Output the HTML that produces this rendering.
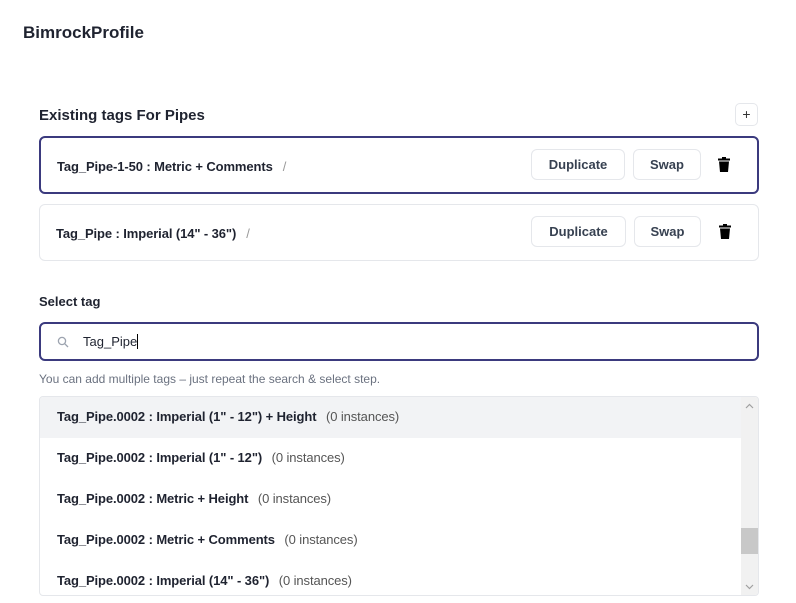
<!DOCTYPE html>
<html><head><style>
*{box-sizing:border-box;margin:0;padding:0}
body{width:796px;height:603px;background:#fff;font-family:"Liberation Sans",sans-serif;color:#1f2330;position:relative;overflow:hidden}
.abs{position:absolute}
.title{left:23px;top:23px;font-size:17px;font-weight:600}
.h{left:39px;top:107px;font-size:15px;font-weight:600}
.plus{left:735px;top:103px;width:23px;height:23px;border:1px solid #e5e7eb;border-radius:5px;text-align:center;line-height:20px;font-size:14px;color:#333}
.card{left:39px;width:720px;border:1px solid #e5e7eb;border-radius:6px}
.card.sel{border:2px solid #3b3a7e}
.card .t{position:absolute;left:16px;font-size:13px;font-weight:600;letter-spacing:-0.1px}
.card .t span{color:#999;font-weight:400;margin-left:10px}
.btn{position:absolute;height:31px;border:1px solid #e5e7eb;border-radius:6px;font-size:13px;font-weight:600;text-align:center;line-height:29px;color:#374151}
.lbl{left:39px;top:294px;font-size:13px;font-weight:600}
.inp{left:39px;top:322px;width:720px;height:39px;border:2px solid #3b3a7e;border-radius:6px}
.hint{left:39px;top:372px;font-size:12px;color:#6b7280}
.list{left:39px;top:396px;width:720px;height:200px;border:1px solid #e5e7eb;border-radius:4px;overflow:hidden}
.row{position:absolute;left:0;width:702px;height:41px;font-size:13px;font-weight:600;padding-left:17px;line-height:39px;letter-spacing:-0.1px}
.row span{font-weight:400;color:#555;margin-left:6px}
.sb{position:absolute;right:0;top:0;width:17px;height:198px;background:#f1f1f1}
</style></head><body>
<div class="abs title">BimrockProfile</div>
<div class="abs h">Existing tags For Pipes</div>
<div class="abs plus">+</div>
<div class="abs card sel" style="top:136px;height:58px">
 <div class="t" style="top:21px">Tag_Pipe-1-50 : Metric + Comments<span>/</span></div>
 <div class="btn" style="left:490px;top:11px;width:94px">Duplicate</div>
 <div class="btn" style="left:592px;top:11px;width:68px">Swap</div>
 <svg class="abs" style="left:677px;top:19px" width="12" height="15" viewBox="0 0 12 15"><rect x="0" y="1.5" width="12" height="2" fill="#000"/><rect x="4" y="0" width="4" height="2" fill="#000"/><path d="M1 4.5h10l-1 10.5H2z" fill="#000"/></svg>
</div>
<div class="abs card" style="top:204px;height:57px">
 <div class="t" style="top:21px">Tag_Pipe : Imperial (14" - 36")<span>/</span></div>
 <div class="btn" style="left:491px;top:11px;width:95px">Duplicate</div>
 <div class="btn" style="left:594px;top:11px;width:67px">Swap</div>
 <svg class="abs" style="left:679px;top:19px" width="12" height="15" viewBox="0 0 12 15"><rect x="0" y="1.5" width="12" height="2" fill="#000"/><rect x="4" y="0" width="4" height="2" fill="#000"/><path d="M1 4.5h10l-1 10.5H2z" fill="#000"/></svg>
</div>
<div class="abs lbl">Select tag</div>
<div class="abs inp">
 <svg class="abs" style="left:16px;top:12px" width="12" height="12" viewBox="0 0 12 12"><circle cx="5" cy="5" r="3.6" stroke="#9ca3af" stroke-width="1.3" fill="none"/><path d="M7.7 7.7L11 11" stroke="#9ca3af" stroke-width="1.3"/></svg>
 <div class="abs" style="left:42px;top:10px;font-size:13px">Tag_Pipe<span style="border-left:1px solid #000;margin-left:0"></span></div>
</div>
<div class="abs hint">You can add multiple tags – just repeat the search &amp; select step.</div>
<div class="abs list">
 <div class="row" style="top:0;background:#f2f3f5">Tag_Pipe.0002 : Imperial (1" - 12") + Height <span>(0 instances)</span></div>
 <div class="row" style="top:41px">Tag_Pipe.0002 : Imperial (1" - 12") <span>(0 instances)</span></div>
 <div class="row" style="top:82px">Tag_Pipe.0002 : Metric + Height <span>(0 instances)</span></div>
 <div class="row" style="top:123px">Tag_Pipe.0002 : Metric + Comments <span>(0 instances)</span></div>
 <div class="row" style="top:164px">Tag_Pipe.0002 : Imperial (14" - 36") <span>(0 instances)</span></div>
 <div class="sb">
  <svg class="abs" style="left:4px;top:6px" width="9" height="6" viewBox="0 0 9 6"><path d="M1 5L4.5 1.5L8 5" stroke="#a0a0a0" stroke-width="1.2" fill="none"/></svg>
  <div class="abs" style="left:0;top:131px;width:17px;height:26px;background:#c8c8c8"></div>
  <svg class="abs" style="left:4px;top:187px" width="9" height="6" viewBox="0 0 9 6"><path d="M1 1L4.5 4.5L8 1" stroke="#a0a0a0" stroke-width="1.2" fill="none"/></svg>
 </div>
</div>
</body></html>
